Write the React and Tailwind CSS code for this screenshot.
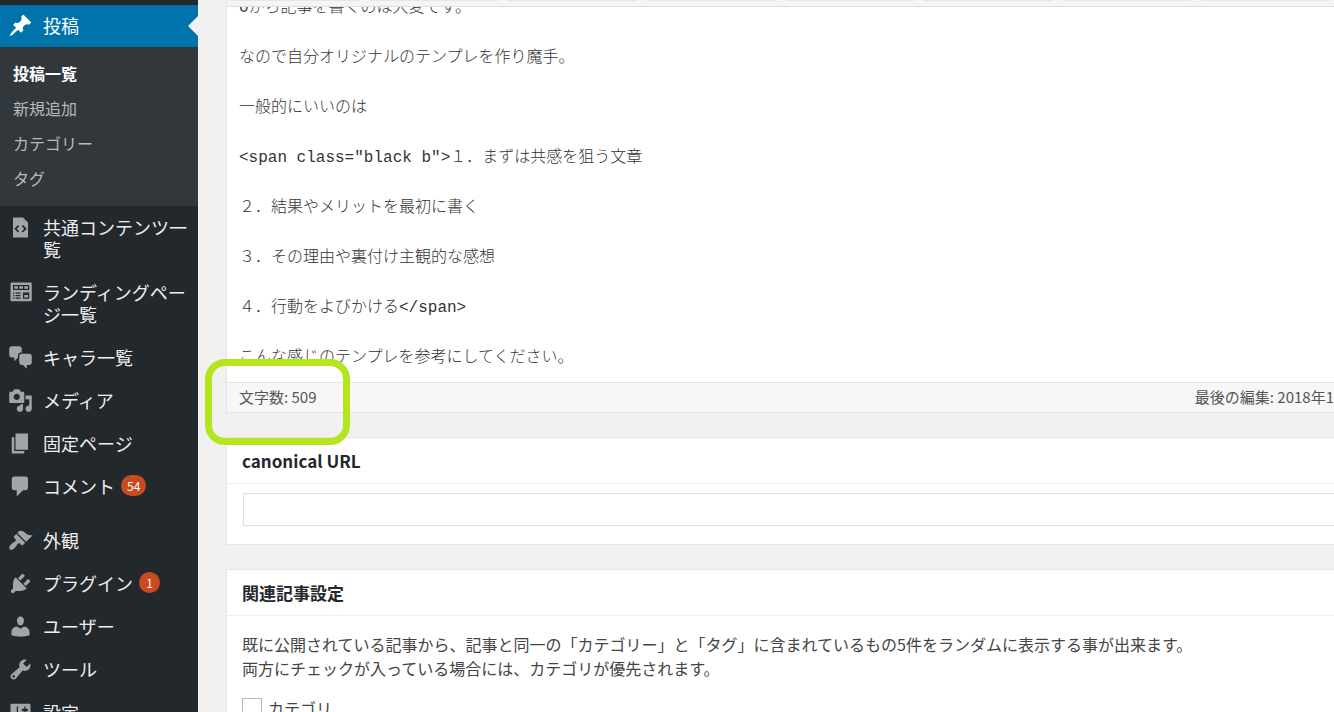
import { useLayoutEffect, useRef } from "react"
import clsx from "clsx"

const icons = {
  post: "M10.44 3.02l1.82-1.82 6.36 6.35-1.83 1.82c-1.05-.68-2.48-.57-3.41.36l-.75.75c-.92.93-1.04 2.35-.35 3.41l-1.83 1.82-2.41-2.41-2.8 2.79c-.42.42-3.38 2.71-3.8 2.29s1.86-3.39 2.28-3.81l2.79-2.79L4.1 9.36l1.83-1.82c1.05.69 2.48.57 3.4-.36l.75-.75c.93-.92 1.05-2.35.36-3.41z",
  code: "M12 2l4 4v12H4V2h8zM9 13l-2-2 2-2-1-1-3 3 3 3zm3 1l3-3-3-3-1 1 2 2-2 2z",
  widgets:
    "M19 16V3c0-.55-.45-1-1-1H3c-.55 0-1 .45-1 1v13c0 .55.45 1 1 1h15c.55 0 1-.45 1-1zM4 4h13v4H4V4zm1 1v2h3V5H5zm4 0v2h3V5H9zm4 0v2h3V5h-3zM4 10h1v1H4v-1zm2 0h4v1H6v-1zm6 0h5v5h-5v-5zm1 2v2h3v-2h-3zm-9 0h1v1H4v-1zm2 0h4v1H6v-1zm-2 2h1v1H4v-1zm2 0h4v1H6v-1z",
  chat: "M11 6h-.82C9.07 6 8 7.2 8 8.16V10l-3 3v-3H3c-1.1 0-2-.9-2-2V3c0-1.1.9-2 2-2h6c1.1 0 2 .9 2 2v3zm0 1h6c1.1 0 2 .9 2 2v5c0 1.1-.9 2-2 2h-2v3l-3-3h-1c-1.1 0-2-.9-2-2V9c0-1.1.9-2 2-2z",
  media:
    "M13 11V4c0-.55-.45-1-1-1h-1.67L9 1H5L3.67 3H2c-.55 0-1 .45-1 1v7c0 .55.45 1 1 1h10c.55 0 1-.45 1-1zM7 4.5c1.38 0 2.5 1.12 2.5 2.5S8.38 9.5 7 9.5 4.5 8.38 4.5 7 5.62 4.5 7 4.5zM14 6h5v10.5c0 1.38-1.12 2.5-2.5 2.5S14 17.88 14 16.5s1.12-2.5 2.5-2.5c.17 0 .34.02.5.05V9h-3V6zm-4 8.05V13h2v3.5c0 1.38-1.12 2.5-2.5 2.5S7 17.88 7 16.5 8.12 14 9.5 14c.17 0 .34.02.5.05z",
  page: "M6 15V2h10v13H6zm-1 1h8v2H3V5h2v11z",
  comments: "M5 2h9c1.1 0 2 .9 2 2v7c0 1.1-.9 2-2 2h-2l-5 5v-5H5c-1.1 0-2-.9-2-2V4c0-1.1.9-2 2-2z",
  appearance:
    "M14.48 11.06L7.41 3.99l1.5-1.5c.5-.56 2.3-.47 3.51.32 1.21.8 1.43 1.28 2.91 2.1 1.18.64 2.45 1.26 4.45.85zm-.71.71L6.7 4.7 4.93 6.47c-.39.39-.39 1.02 0 1.41l1.06 1.06c.39.39.39 1.03 0 1.42-.6.6-1.43 1.11-2.21 1.69-.35.26-.7.53-1.01.84C1.43 14.23.4 16.08 1.4 17.07c.99 1 2.84-.03 4.18-1.36.31-.31.58-.66.85-1.02.57-.78 1.08-1.61 1.69-2.21.39-.39 1.02-.39 1.41 0l1.06 1.06c.39.39 1.02.39 1.41 0z",
  plugins:
    "M13.11 4.36L9.87 7.6 8 5.73l3.24-3.24c.35-.34 1.05-.2 1.56.32.52.51.66 1.21.31 1.55zm-8 1.77l.91-1.12 9.01 9.01-1.19.84c-.71.71-2.63 1.16-3.82 1.16H6.14L4.9 17.26c-.59.59-1.54.59-2.12 0-.59-.58-.59-1.53 0-2.12l1.24-1.24v-3.88c0-1.13.4-3.19 1.09-3.89zm7.26 3.97l3.24-3.24c.34-.35 1.04-.21 1.55.31.52.51.66 1.21.31 1.55l-3.24 3.25z",
  users:
    "M10 9.25c-2.27 0-2.73-3.44-2.73-3.44C7 4.02 7.82 2 9.97 2c2.16 0 2.98 2.02 2.71 3.81 0 0-.41 3.44-2.68 3.44zm0 2.57L12.72 10c2.39 0 4.52 2.33 4.52 4.53v2.49s-3.65 1.13-7.24 1.13c-3.65 0-7.24-1.13-7.24-1.13v-2.49c0-2.25 1.94-4.48 4.47-4.48z",
  tools:
    "M16.68 9.77c-1.34 1.34-3.3 1.67-4.95.99l-5.41 6.52c-.99.99-2.59.99-3.58 0s-.99-2.59 0-3.57l6.52-5.42c-.68-1.65-.35-3.61.99-4.95 1.28-1.28 3.12-1.62 4.72-1.06l-2.89 2.89 2.82 2.82 2.86-2.87c.53 1.58.18 3.39-1.08 4.65zM3.81 16.21c.4.39 1.04.39 1.43 0 .4-.4.4-1.04 0-1.43-.39-.4-1.03-.4-1.43 0-.39.39-.39 1.03 0 1.43z",
  settings:
    "M18 16V4c0-.55-.45-1-1-1H3c-.55 0-1 .45-1 1v12c0 .55.45 1 1 1h14c.55 0 1-.45 1-1zM8 11h1c.55 0 1 .45 1 1s-.45 1-1 1H8v1.5c0 .28-.22.5-.5.5s-.5-.22-.5-.5V13H6c-.55 0-1-.45-1-1s.45-1 1-1h1V5.5c0-.28.22-.5.5-.5s.5.22.5.5V11zm5-2h-1c-.55 0-1-.45-1-1s.45-1 1-1h1V5.5c0-.28.22-.5.5-.5s.5.22.5.5V7h1c.55 0 1 .45 1 1s-.45 1-1 1h-1v5.5c0 .28-.22.5-.5.5s-.5-.22-.5-.5V9z",
}

const contentMenu = [
  { label: "共通コンテンツ一覧", icon: "code" },
  { label: "ランディングページ一覧", icon: "widgets" },
  { label: "キャラ一覧", icon: "chat" },
  { label: "メディア", icon: "media" },
  { label: "固定ページ", icon: "page" },
  { label: "コメント", icon: "comments", badge: 54 },
]

const adminMenu = [
  { label: "外観", icon: "appearance" },
  { label: "プラグイン", icon: "plugins", badge: 1 },
  { label: "ユーザー", icon: "users" },
  { label: "ツール", icon: "tools" },
  { label: "設定", icon: "settings" },
]

const submenu = ["投稿一覧", "新規追加", "カテゴリー", "タグ"]

const draft = [
  "0から記事を書くのは大変です。",
  "なので自分オリジナルのテンプレを作り魔手。",
  "一般的にいいのは",
  '<span class="black b">１．まずは共感を狙う文章',
  "２．結果やメリットを最初に書く",
  "３．その理由や裏付け主観的な感想",
  "４．行動をよびかける</span>",
  "こんな感じのテンプレを参考にしてください。",
].join("\n\n")

const Icon = ({ name }) => (
  <span className="flex h-[22px] w-[25px] shrink-0 items-center">
    <svg viewBox="0 0 20 20" className="size-[25px] shrink-0 fill-current" aria-hidden="true">
      <path fillRule="evenodd" d={icons[name]} />
    </svg>
  </span>
)

const MenuItem = ({ label, icon, badge }) => (
  <li>
    <a href="#" className="flex gap-[10px] px-2 pt-[9px] pb-[11px] text-[18px] leading-[22px] text-[#eee]">
      <span className="text-[#a0a5aa]">
        <Icon name={icon} />
      </span>
      <span className="min-w-0">{label}</span>
      {badge && (
        <span className="-ml-1 flex h-[21px] min-w-[21px] items-center justify-center rounded-full bg-[#ca4a1f] px-[6px] text-[12px] text-white">
          {badge}
        </span>
      )}
    </a>
  </li>
)

const Sidebar = () => (
  <nav className="w-[198px] shrink-0 bg-[#23282d] pt-[5px]">
    <ul className="flex flex-col gap-px">
      <li>
        <a
          href="#"
          className="relative flex gap-[10px] bg-[#0073aa] px-2 pt-[9px] pb-[11px] text-[18px] leading-[22px] text-white"
        >
          <Icon name="post" />
          投稿
          <span className="absolute top-[11px] right-0 border-y-10 border-r-10 border-y-transparent border-r-[#f1f1f1]" />
        </a>
        <ul className="bg-[#32373c] pt-[9px] pb-[10px] pl-[13px] text-[16px] leading-[35px]">
          {submenu.map((item, i) => (
            <li key={item}>
              <a href="#" className={clsx(i === 0 ? "font-bold text-white" : "text-[#b4b9be]")}>
                {item}
              </a>
            </li>
          ))}
        </ul>
      </li>
      {contentMenu.map((item) => (
        <MenuItem key={item.label} {...item} />
      ))}
    </ul>
    <ul className="mt-3 flex flex-col gap-px">
      {adminMenu.map((item) => (
        <MenuItem key={item.label} {...item} />
      ))}
    </ul>
  </nav>
)

const Editor = () => {
  const ref = useRef(null)

  useLayoutEffect(() => {
    ref.current.scrollTop = 11
  }, [])

  return (
    <section className="border border-t-0 border-r-0 border-[#e5e5e5] bg-white">
      {/* lower edge of the quicktags toolbar */}
      <div className="flex h-[7px] gap-[10px] border-b border-[#dedede] bg-[#f5f5f5] px-1">
        {[...Array(8)].map((_, i) => (
          <span key={i} className="h-px flex-1 bg-[#e6e6e6]" />
        ))}
      </div>
      <textarea
        ref={ref}
        aria-label="本文"
        defaultValue={draft}
        spellCheck={false}
        className="block h-[375px] w-full resize-none overflow-hidden bg-white px-3 pb-5 font-['Liberation_Mono','Noto_Sans_CJK_JP',monospace] text-[16px] leading-[25px] font-light text-[#333] outline-none"
      />
      <div className="relative flex justify-between border-t border-[#e5e5e5] bg-[#f7f7f7] pb-[2px] pl-3 text-[15px] leading-[27px] whitespace-nowrap text-[#555]">
        <span>文字数: 509</span>
        <span>最後の編集: 2018年1</span>
        <span className="pointer-events-none absolute -top-6 -left-[22px] h-[86px] w-[145px] rounded-[20px] border-[7px] border-[#b5e61d]" />
      </div>
    </section>
  )
}

const Panel = ({ title, children }) => (
  <section className="border border-r-0 border-[#e5e5e5] bg-white">
    <h2 className="border-b border-[#eee] px-[15px] text-[17px] leading-[45px] font-semibold text-[#23282d]">
      {title}
    </h2>
    {children}
  </section>
)

const App = () => (
  <div className="flex h-screen overflow-hidden bg-[#f1f1f1] font-['Noto_Sans_CJK_JP',sans-serif]">
    <Sidebar />
    <main className="flex min-w-0 flex-1 flex-col gap-6 pl-7">
      <Editor />
      <Panel title={<label htmlFor="canonical">canonical URL</label>}>
        <div className="pt-[9px] pb-[18px] pl-4">
          <input
            id="canonical"
            type="text"
            className="block h-[33px] w-full border border-r-0 border-[#ddd] bg-white px-2 text-[16px] outline-none"
          />
        </div>
      </Panel>
      <Panel title="関連記事設定">
        <div className="px-[15px] pt-4 text-[16px] leading-6 text-[#444]">
          <p>
            既に公開されている記事から、記事と同一の「カテゴリー」と「タグ」に含まれているもの5件をランダムに表示する事が出来ます。
            <br />
            両方にチェックが入っている場合には、カテゴリが優先されます。
          </p>
          <label className="mt-4 flex items-center gap-[6px]">
            <input type="checkbox" className="size-5 appearance-none border border-[#b4b9be] bg-white" />
            カテゴリ
          </label>
        </div>
      </Panel>
    </main>
  </div>
)

export default App
